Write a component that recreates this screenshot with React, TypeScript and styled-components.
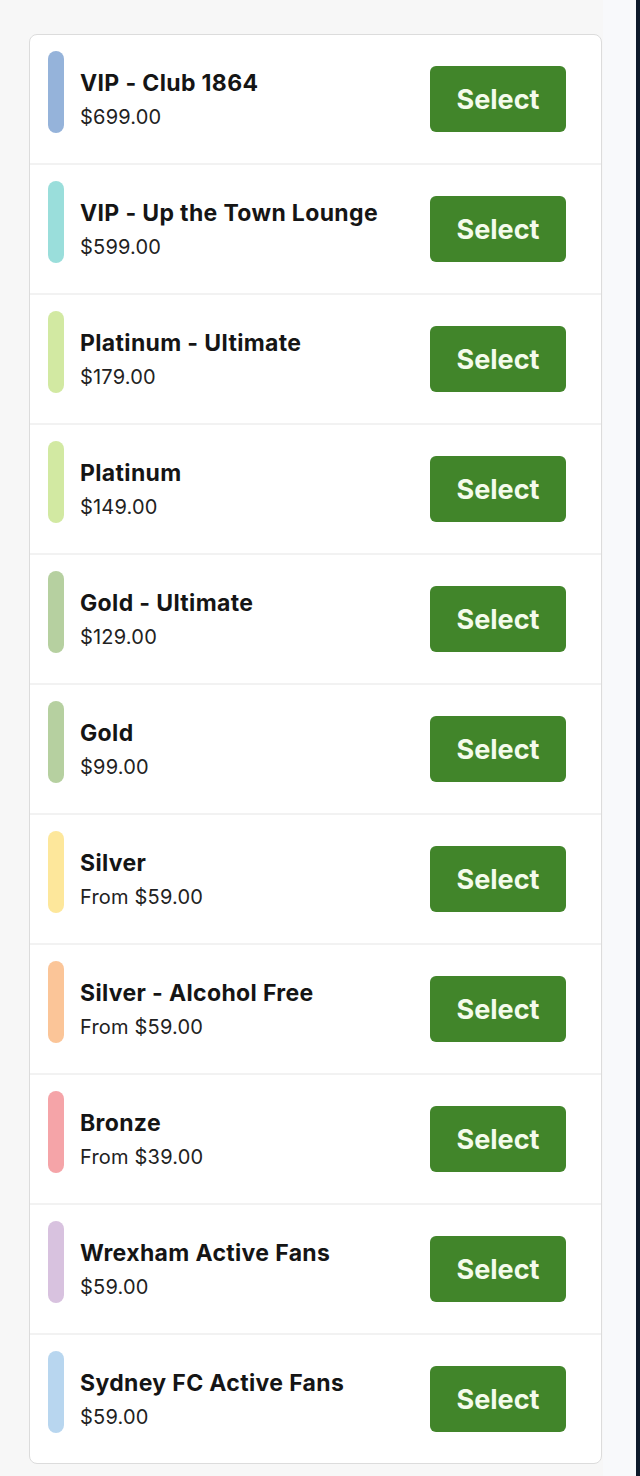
import styled, { createGlobalStyle } from "styled-components";

// ticket tiers shown in the list
interface ITier {
  name: string;
  price: string;
  color: string;
}

const tiers: ITier[] = [
  { name: "VIP - Club 1864", price: "$699.00", color: "#95b3da" },
  { name: "VIP - Up the Town Lounge", price: "$599.00", color: "#9adedb" },
  { name: "Platinum - Ultimate", price: "$179.00", color: "#d2e9a2" },
  { name: "Platinum", price: "$149.00", color: "#d2e9a2" },
  { name: "Gold - Ultimate", price: "$129.00", color: "#b6d0a0" },
  { name: "Gold", price: "$99.00", color: "#b6d0a0" },
  { name: "Silver", price: "From $59.00", color: "#fde79b" },
  { name: "Silver - Alcohol Free", price: "From $59.00", color: "#fbc598" },
  { name: "Bronze", price: "From $39.00", color: "#f5a4a8" },
  { name: "Wrexham Active Fans", price: "$59.00", color: "#d8c2df" },
  { name: "Sydney FC Active Fans", price: "$59.00", color: "#b8d6ef" },
];

export default function App() {
  return (
    <>
      <GlobalStyle />
      <Page>
        <Main>
          <Card>
            {tiers.map((tier) => (
              <Row key={tier.name}>
                <ColorBar $color={tier.color} />
                <Info>
                  <Name>{tier.name}</Name>
                  <Price>{tier.price}</Price>
                </Info>
                <SelectButton>Select</SelectButton>
              </Row>
            ))}
          </Card>
        </Main>
        <Gutter />
      </Page>
    </>
  );
}

const GlobalStyle = createGlobalStyle`
  * { box-sizing: border-box; }
  body {
    margin: 0;
    background: #f7f7f7;
    font-family: Inter, "Noto Sans", sans-serif;
    color: #161616;
  }
`;

const Page = styled.div`
  display: flex;
  width: 640px;
  min-height: 1476px;
`;

const Main = styled.main`
  flex: 1;
  padding: 34px 0 0 29px;
  background: linear-gradient(to right, #f7f7f7 603px, #f8f9fb 603px);
`;

const Gutter = styled.div`
  flex: 0 0 4px;
  background: #0e1a2b;
`;

const Card = styled.section`
  width: 573px;
  background: #fff;
  border: 1px solid #dcdcdc;
  border-radius: 8px;
  overflow: hidden;
`;

const Row = styled.div`
  display: flex;
  align-items: center;
  height: 130px;
  padding: 0 35px 0 18px;
  border-bottom: 2px solid #f2f2f2;

  &:last-child {
    height: 128px;
    border-bottom: 0;
  }
`;

const ColorBar = styled.div<{ $color: string }>`
  align-self: flex-start;
  flex-shrink: 0;
  width: 16px;
  height: 82px;
  margin-top: 16px;
  border-radius: 8px;
  background: ${(p) => p.$color};
`;

const Info = styled.div`
  flex: 1;
  display: flex;
  flex-direction: column;
  gap: 7px;
  margin-left: 16px;
`;

const Name = styled.span`
  font-size: 23px;
  line-height: 28px;
  font-weight: 700;
  letter-spacing: 0.35px;
  color: #151515;
`;

const Price = styled.span`
  font-size: 20px;
  line-height: 26px;
  letter-spacing: 0.2px;
  color: #222;
`;

const SelectButton = styled.button`
  width: 136px;
  height: 66px;
  border: 0;
  border-radius: 6px;
  background: #41852a;
  color: #f4fbec;
  font-family: Inter, "Noto Sans", sans-serif;
  font-size: 27px;
  font-weight: 700;
  cursor: pointer;
`;
